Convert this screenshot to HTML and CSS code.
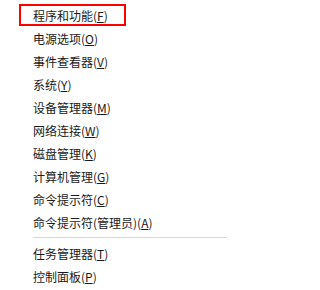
FILE: index.html
```html
<!DOCTYPE html>
<html lang="zh-CN">
<head>
<meta charset="utf-8">
<link rel="stylesheet" href="styles.css">
</head>
<body>
<ul class="menu">
  <li class="item item-selected">程序和功能(<u>F</u>)</li>
  <li class="item">电源选项(<u>O</u>)</li>
  <li class="item">事件查看器(<u>V</u>)</li>
  <li class="item">系统(<u>Y</u>)</li>
  <li class="item">设备管理器(<u>M</u>)</li>
  <li class="item">网络连接(<u>W</u>)</li>
  <li class="item">磁盘管理(<u>K</u>)</li>
  <li class="item">计算机管理(<u>G</u>)</li>
  <li class="item">命令提示符(<u>C</u>)</li>
  <li class="item">命令提示符(管理员)(<u>A</u>)</li>
  <li class="separator"></li>
  <li class="item">任务管理器(<u>T</u>)</li>
  <li class="item">控制面板(<u>P</u>)</li>
</ul>
</body>
</html>
```

FILE: styles.css
```css
html, body {
  margin: 0;
  padding: 0;
  background: #ffffff;
}

body {
  width: 227px;
  height: 290px;
  overflow: hidden;
  font-family: "Noto Sans CJK SC", "Noto Sans", sans-serif;
  font-size: 12px;
  color: #1a1a1a;
}

.menu {
  list-style: none;
  margin: 0;
  padding: 4px 0 0 0;
  display: flex;
  flex-direction: column;
}

.item {
  position: relative;
  height: 23px;
  line-height: 23px;
  padding-left: 33px;
  white-space: nowrap;
}

.item u {
  text-decoration: underline;
  text-underline-offset: 1px;
}

.item-selected::before {
  content: "";
  position: absolute;
  left: 19px;
  top: 0;
  width: 107px;
  height: 22px;
  box-sizing: border-box;
  border: 2px solid #ff0000;
}

.separator {
  height: 1px;
  margin: 3px 0 4px 33px;
  background: #d7d7d7;
}
```
